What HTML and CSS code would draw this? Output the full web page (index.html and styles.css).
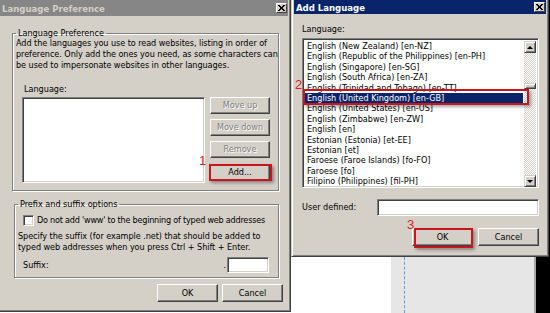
FILE: index.html
```html
<!DOCTYPE html>
<html>
<head>
<meta charset="utf-8">
<link rel="stylesheet" href="styles.css">
</head>
<body>
<div class="screen">

  <div class="win w-pref">
    <div class="titlebar inactive">
      <span>Language Preference</span>
      <span class="close"><svg width="7" height="6" viewBox="0 0 7 6"><path d="M0 0L6 6M1 0L7 6M6 0L0 6M7 0L1 6" stroke="#000" stroke-width="1"/></svg></span>
    </div>
    <fieldset class="group g-lang">
      <legend>Language Preference</legend>
      <p class="text">Add the languages you use to read websites, listing in order of<br>preference. Only add the ones you need, as some characters can<br>be used to impersonate websites in other languages.</p>
      <div class="label l-lang">Language:</div>
      <div class="list-row">
        <div class="sunken listbox-empty"></div>
        <div class="side-btns">
          <div class="btn disabled">Move up</div>
          <div class="btn disabled">Move down</div>
          <div class="btn disabled">Remove</div>
          <div class="btn b-add">Add...</div>
        </div>
      </div>
    </fieldset>
    <fieldset class="group g-prefix">
      <legend>Prefix and suffix options</legend>
      <div class="check-row"><span class="sunken checkbox"></span><span class="check-text">Do not add 'www' to the beginning of typed web addresses</span></div>
      <p class="text t-suffix">Specify the suffix (for example .net) that should be added to<br>typed web addresses when you press Ctrl + Shift + Enter.</p>
      <div class="suffix-row">
        <span class="s-label">Suffix:</span>
        <span class="dot">.</span>
        <span class="sunken suffix-input"></span>
      </div>
    </fieldset>
    <div class="dlg-btns">
      <div class="btn">OK</div>
      <div class="btn">Cancel</div>
    </div>
  </div>

  <div class="right-col">
    <div class="win w-add">
      <div class="titlebar active">
        <span>Add Language</span>
        <span class="close"><svg width="7" height="6" viewBox="0 0 7 6"><path d="M0 0L6 6M1 0L7 6M6 0L0 6M7 0L1 6" stroke="#000" stroke-width="1"/></svg></span>
      </div>
      <div class="add-body">
        <div class="label">Language:</div>
        <div class="sunken langlist">
          <ul class="items">
            <li>English (New Zealand) [en-NZ]</li>
            <li>English (Republic of the Philippines) [en-PH]</li>
            <li>English (Singapore) [en-SG]</li>
            <li>English (South Africa) [en-ZA]</li>
            <li>English (Trinidad and Tobago) [en-TT]</li>
            <li class="sel">English (United Kingdom) [en-GB]</li>
            <li>English (United States) [en-US]</li>
            <li>English (Zimbabwe) [en-ZW]</li>
            <li>English [en]</li>
            <li>Estonian (Estonia) [et-EE]</li>
            <li>Estonian [et]</li>
            <li>Faroese (Faroe Islands) [fo-FO]</li>
            <li>Faroese [fo]</li>
            <li>Filipino (Philippines) [fil-PH]</li>
          </ul>
          <div class="scrollbar">
            <div class="sb-btn"><span class="tri up"></span></div>
            <div class="sb-thumb"></div>
            <div class="sb-btn sb-down"><span class="tri down"></span></div>
          </div>
        </div>
        <div class="user-row">
          <span>User defined:</span>
          <span class="sunken user-input"></span>
        </div>
        <div class="dlg-btns add-btns">
          <div class="btn">OK</div>
          <div class="btn">Cancel</div>
        </div>
      </div>
    </div>
    <div class="backdrop">
      <div class="bd-white"></div>
      <div class="bd-gray"></div>
      <div class="bd-edge"></div>
    </div>
  </div>

  <!-- annotations -->
  <span class="num n1">1</span>
  <span class="num n2">2</span>
  <span class="num n3">3</span>
  <div class="mark m-add"></div>
  <div class="mark m-sel"></div>
  <div class="mark m-ok"></div>
</div>
</body>
</html>
```

FILE: styles.css
```css
* { box-sizing: border-box; }
html, body { margin: 0; padding: 0; background: #fff; }
body {
  font-family: "DejaVu Sans Condensed", "DejaVu Sans", sans-serif;
  font-stretch: condensed;
  font-size: 9px;
  line-height: 11px;
  color: #000;
}
p { margin: 0; }

.screen { position: relative; display: flex; width: 550px; height: 313px; overflow: hidden; }

/* classic window chrome */
.win {
  background: #d4d0c8;
  border: 1px solid;
  border-color: #d4d0c8 #404040 #404040 #d4d0c8;
  box-shadow: inset 1px 1px #fff, inset -1px -1px #808080;
  padding: 2px;
  margin-top: -3px;
}
.titlebar {
  display: flex; justify-content: space-between; align-items: center;
  font-weight: bold; font-size: 9.5px; padding-left: 2px;
  white-space: nowrap;
}
.titlebar.inactive { background: #868686; color: #d4d0c8; height: 16px; }
.titlebar.active { background: #0a246a; color: #fff; height: 14px; }
.close {
  display: flex; align-items: center; justify-content: center;
  width: 11px; height: 10px; margin-right: 1px;
  background: #d4d0c8;
  border: 1px solid; border-color: #fff #404040 #404040 #fff;
}

.btn {
  display: flex; align-items: center; justify-content: center;
  width: 61px; height: 18px;
  background: #d4d0c8;
  border: 1px solid; border-color: #fff #404040 #404040 #fff;
  box-shadow: inset -1px -1px #808080;
  white-space: nowrap;
}
.btn.disabled { color: #808080; text-shadow: 1px 1px #fff; }
.sunken {
  background: #fff;
  border: 1px solid; border-color: #808080 #fff #fff #808080;
  box-shadow: inset 1px 1px #404040, inset -1px -1px #d4d0c8;
}

.group {
  margin: 0; padding: 0 3px;
  min-width: 0;
  border: 1px solid #808080;
  box-shadow: 1px 1px #fff, inset 1px 1px #fff;
}
.group legend { padding: 0 2px; line-height: 10px; }
.text { white-space: nowrap; letter-spacing: -0.05px; }

/* Language Preference window */
.w-pref { width: 294px; height: 315px; margin-left: -3px; flex: none; }
.g-lang { margin: 12px 0 0 12px; width: 267px; padding-bottom: 7px; }
.l-lang { margin: 13px 0 0 8px; }
.list-row { display: flex; margin-top: 2px; padding-left: 6px; }
.listbox-empty { width: 183px; height: 86px; }
.side-btns { display: flex; flex-direction: column; gap: 5px; margin-left: 5px; }
.side-btns .btn { width: 60px; height: 17px; }
.side-btns .b-add { margin-top: 1px; }

.g-prefix { margin: 8px 0 0 14px; width: 265px; padding-bottom: 4px; }
.check-row { display: flex; align-items: center; margin: 6px 0 0 5px; white-space: nowrap; }
.check-text { letter-spacing: -0.22px; }
.checkbox { width: 11px; height: 11px; margin-right: 3px; flex: none; }
.t-suffix { margin-top: 5px; }
.suffix-row { display: flex; align-items: center; height: 16px; margin: 4px 6px 0 5px; }
.s-label { flex: 1; }
.dot { margin-right: 1px; }
.suffix-input { width: 42px; height: 16px; }

.dlg-btns { display: flex; justify-content: flex-end; gap: 4px; margin-top: 6px; padding-right: 5px; }

/* Add Language window */
.right-col { display: flex; flex-direction: column; width: 259px; flex: none; background: #000; }
.w-add { width: 258px; height: 260px; flex: none; }
.add-body { padding: 0 7px 0 8px; }
.add-body .label { margin-top: 10px; }
.langlist { display: flex; width: 237px; height: 150px; margin-top: 3px; padding: 2px; overflow: hidden; }
.items { list-style: none; margin: 0; padding: 0; width: 220px; height: 146px; overflow: hidden; }
.items li { height: 10.4px; line-height: 10.4px; padding-left: 2px; white-space: nowrap; }
.items li.sel { background: #0a246a; color: #fff; margin-right: 1px; }
.scrollbar {
  width: 12px; height: 146px;
  background: repeating-conic-gradient(#fff 0 25%, #d4d0c8 0 50%) 0 0 / 2px 2px;
  display: flex; flex-direction: column;
}
.sb-btn, .sb-thumb {
  background: #d4d0c8;
  border: 1px solid; border-color: #d4d0c8 #404040 #404040 #d4d0c8;
  box-shadow: inset 1px 1px #fff, inset -1px -1px #808080;
  display: flex; align-items: center; justify-content: center;
}
.sb-btn { height: 12px; }
.sb-thumb { height: 6px; margin-top: 30px; }
.sb-down { margin-top: auto; }
.tri { width: 0; height: 0; border-left: 3px solid transparent; border-right: 3px solid transparent; }
.tri.up { border-bottom: 3px solid #000; }
.tri.down { border-top: 3px solid #000; }

.user-row { display: flex; align-items: center; justify-content: space-between; margin-top: 11px; height: 17px; }
.user-input { width: 162px; height: 17px; }
.add-btns { margin-top: 12px; padding-right: 0; gap: 5px; }

.backdrop { display: flex; flex: 1; }
.bd-white { width: 100px; background: #fff; }
.bd-gray { width: 143px; background: #e6e6e6; border-left: 13px solid #e6e6e6; }
.bd-gray::before { content: ""; display: block; height: 100%; border-left: 1px dashed #5d98e0; }
.bd-edge { width: 2px; background: #a8a8a8; }

/* red annotations */
.num { position: absolute; color: #dd2222; font-family: "Liberation Sans", sans-serif; font-size: 13px; line-height: 13px; }
.n1 { left: 199px; top: 154px; }
.n2 { left: 295px; top: 78px; }
.n3 { left: 407px; top: 218px; }
.mark {
  position: absolute;
  border: 2px solid #c8161c;
  box-shadow: 2px 2px 3px rgba(0, 0, 0, 0.35);
}
.m-add { left: 209px; top: 164px; width: 63px; height: 17px; }
.m-sel { left: 303px; top: 89px; width: 226px; height: 16px; }
.m-ok { left: 414px; top: 228px; width: 59px; height: 20px; }
```
